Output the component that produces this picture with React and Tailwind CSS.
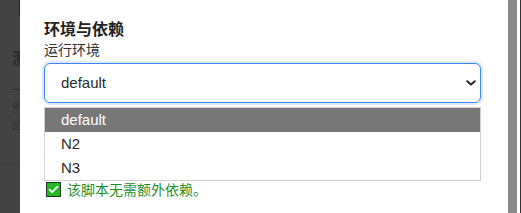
import React from 'react';

const cjk = { fontFamily: '"Noto Sans CJK SC", "Liberation Sans", sans-serif' };
const latin = { fontFamily: '"Liberation Sans", Arial, sans-serif' };

const options = ['default', 'N2', 'N3'];

const App = () => {
  return (
    <div className="w-[521px] h-[213px] flex overflow-hidden bg-[#3f3f3f]">
      {/* Backdrop sliver */}
      <div className="w-[20px] h-full bg-[#434343] relative shrink-0" style={cjk}>
        <div className="absolute left-[19px] top-0 w-[1px] h-[16px] bg-[#222]"></div>
        <div className="absolute left-[12px] top-[45px] text-[16px] font-bold text-[#2a2a2a]">测</div>
        <div className="absolute left-[12px] top-[89px] w-[8px] h-[1px] bg-[#2e2e2e]"></div>
        <div className="absolute left-[12px] top-[98px] text-[12px] text-[#333]">例</div>
        <div className="absolute left-[12px] top-[116px] text-[12px] text-[#333]">应</div>
        <div className="absolute left-0 top-[163px] w-full h-[1px] bg-[#3a3a3a]"></div>
      </div>

      {/* Modal */}
      <div className="w-[488px] h-full bg-white shrink-0 pl-[24px] pr-[27px] pt-[16px] relative">
        <h2 className="text-[16px] leading-[24px] font-bold text-[#222]" style={cjk}>环境与依赖</h2>
        <div className="text-[14px] leading-[20px] text-[#333] -mt-[1px]" style={cjk}>运行环境</div>

        <div className="relative mt-[4px]">
          <div className="h-[40px] w-[437px] rounded-[6px] border border-[#3d84f5] ring-2 ring-[#dfeafc] flex items-center justify-between pl-[16px] pr-[4px]">
            <span className="text-[15px] text-[#2a2a2a]" style={latin}>default</span>
            <svg width="10" height="6" viewBox="0 0 10 6" fill="none">
              <path d="M1.2 1.2 L5 4.6 L8.8 1.2" stroke="#2a2a2a" strokeWidth="2" strokeLinecap="round" strokeLinejoin="round" />
            </svg>
          </div>

          {/* Open option list */}
          <ul className="absolute left-0 top-[44px] w-[437px] border border-[#d2d2d2] bg-white z-10" style={latin}>
            {options.map((opt, i) => (
              <li
                key={opt}
                className={`h-[24px] flex items-center pl-[16px] text-[15px] ${i === 0 ? 'bg-[#777777] text-white' : 'text-[#2a2a2a]'}`}
              >
                {opt}
              </li>
            ))}
          </ul>
        </div>

        <div className="mt-[78px] flex items-center gap-[6px] pl-[2px]">
          <span className="w-[15px] h-[15px] bg-[#22b922] border border-[#1d3a1d] flex items-center justify-center">
            <svg width="11" height="9" viewBox="0 0 11 9" fill="none">
              <path d="M1.5 4.6 L4.2 7.2 L9.5 1.6" stroke="white" strokeWidth="1.8" strokeLinecap="round" strokeLinejoin="round" />
            </svg>
          </span>
          <span className="text-[14px] leading-[16px] text-[#1f8f1f]" style={cjk}>该脚本无需额外依赖。</span>
        </div>
      </div>

      {/* Scrollbar strip */}
      <div className="w-[9px] h-full bg-[#8a8a8a] shrink-0"></div>
      <div className="w-[3px] h-full bg-white shrink-0"></div>
      <div className="w-[1px] h-full bg-[#333] shrink-0"></div>
    </div>
  );
};

export default App;
